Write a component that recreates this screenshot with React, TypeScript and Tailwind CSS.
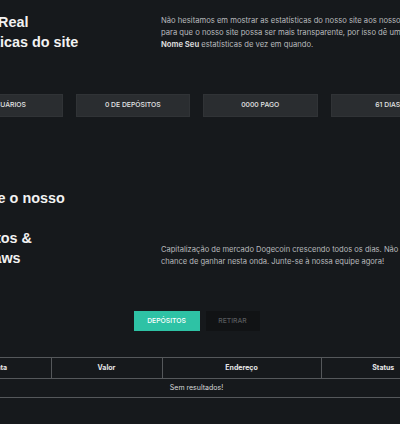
import React from "react";

const body = "font-['Inter','Noto_Sans',sans-serif]";
const head = "font-['Liberation_Sans',Arial,sans-serif]";

const stats = ["0 USUÁRIOS", "0 DE DEPÓSITOS", "0000 PAGO", "61 DIAS"];

export default function App() {
  return (
    <div className={`w-[400px] h-[424px] overflow-hidden bg-[#16191c] ${body}`}>
      <div className="w-[497px] -ml-[52px]">
        {/* stats intro */}
        <div className="flex items-end pt-[12px]">
          <h2 className={`w-[213px] shrink-0 text-[14.4px] leading-[20px] font-bold text-[#f2f2f2] ${head}`}>
            <span className="block whitespace-nowrap">Tempo Real</span>
            <span className="block whitespace-nowrap">Estatísticas do site</span>
          </h2>
          <div className="flex-1 text-[7.65px] leading-[12px] text-[#b8babc] pb-[1px]">
            <p className="whitespace-nowrap">Não hesitamos em mostrar as estatísticas do nosso site aos nossos membros</p>
            <p className="whitespace-nowrap">para que o nosso site possa ser mais transparente, por isso dê uma olhada nas</p>
            <p className="whitespace-nowrap">
              <b className="font-bold text-[#d6d7d8]">Nome Seu</b> estatísticas de vez em quando.
            </p>
          </div>
        </div>

        <div className="grid grid-cols-4 gap-[13px] mt-[42px]">
          {stats.map((s) => (
            <div
              key={s}
              className="h-[23px] flex items-center justify-center bg-[#2a2d30] border border-[#303336] text-[6.8px] font-medium text-[#e4e5e6] whitespace-nowrap"
            >
              {s}
            </div>
          ))}
        </div>

        {/* deposits section */}
        <div className="flex items-end mt-[71px]">
          <h2 className={`w-[213px] shrink-0 text-[14.4px] leading-[20px] font-bold text-[#f2f2f2] ${head}`}>
            <span className="block whitespace-nowrap">Invista e o nosso</span>
            <span className="block whitespace-nowrap">time</span>
            <span className="block whitespace-nowrap">Depósitos &amp;</span>
            <span className="block whitespace-nowrap">Withdraws</span>
          </h2>
          <div className="flex-1 text-[7.55px] leading-[12px] text-[#b8babc]">
            <p className="whitespace-nowrap">Capitalização de mercado Dogecoin crescendo todos os dias. Não perca a</p>
            <p className="whitespace-nowrap">chance de ganhar nesta onda. Junte-se à nossa equipe agora!</p>
          </div>
        </div>

        <div className="flex justify-center gap-[6px] mt-[43px]">
          <button className="w-[66px] h-[20px] bg-[#2ec2a5] text-white text-[6.8px] font-medium">
            DEPÓSITOS
          </button>
          <button className="w-[54px] h-[20px] bg-[#111315] text-[#575a5d] text-[6.8px] font-medium">
            RETIRAR
          </button>
        </div>

        <table className="w-full mt-[26px] border-collapse table-fixed text-[7px] text-[#e6e7e8]">
          <colgroup>
            <col className="w-[103px]" />
            <col className="w-[111px]" />
            <col className="w-[159px]" />
            <col className="w-[124px]" />
          </colgroup>
          <thead>
            <tr className="h-[21px] border-y border-[#55585b]">
              <th className="font-bold">Data</th>
              <th className="font-bold border-l border-[#55585b]">Valor</th>
              <th className="font-bold border-l border-[#55585b]">Endereço</th>
              <th className="font-bold border-l border-[#55585b]">Status</th>
            </tr>
          </thead>
          <tbody>
            <tr className="h-[19px] border-b border-[#55585b]">
              <td colSpan={4} className="text-center text-[#d8d9da]">
                Sem resultados!
              </td>
            </tr>
          </tbody>
        </table>
      </div>
    </div>
  );
}
